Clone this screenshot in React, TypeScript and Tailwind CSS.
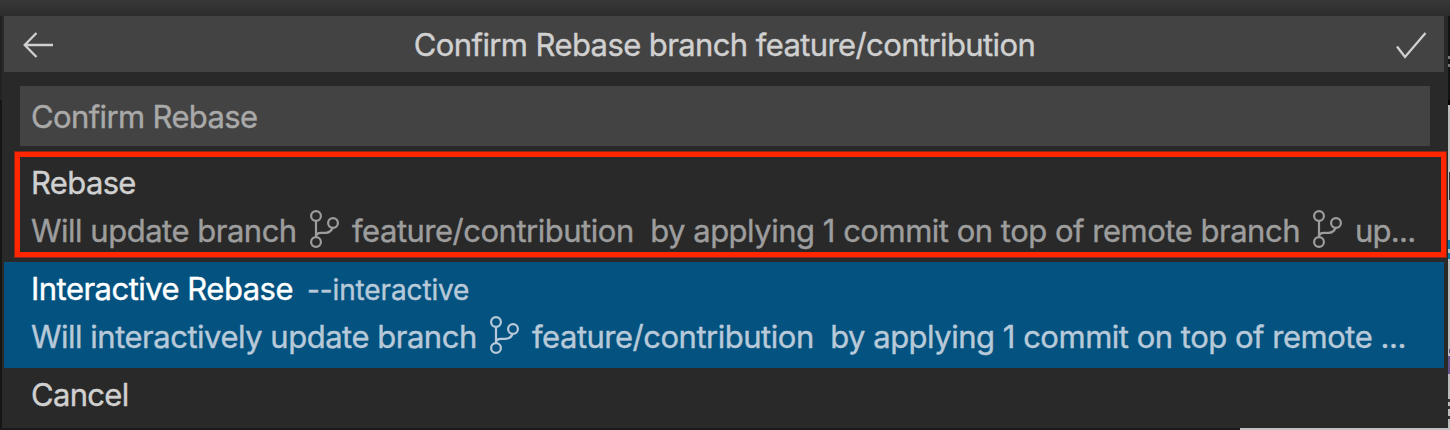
import React from "react";

function BranchIcon({ className = "" }: { className?: string }) {
  return (
    <svg viewBox="0 0 30 38" fill="none" stroke="currentColor" strokeWidth="2.2" className={"-mt-1 h-[38px] w-[30px] shrink-0 " + className}>
      <circle cx="6" cy="6" r="4.9" />
      <circle cx="6" cy="32" r="4.9" />
      <circle cx="23" cy="13" r="4.9" />
      <path d="M6 11v16c0-2.4 1.8-4.2 5-4.2h4.5c3.4 0 5.8-1.8 7-4.8" />
    </svg>
  );
}

function EditorEdge() {
  return (
    <div className="flex w-0.5 shrink-0 flex-col bg-[#bdbdbd]">
      <div className="h-10 shrink-0 bg-[#131313]" />
      <div className="h-[3px] shrink-0 bg-[#777]" />
      <div className="h-[5px] shrink-0 bg-[#131313]" />
      <div className="h-[3px] shrink-0 bg-[#777]" />
      <div className="h-[33px] shrink-0 bg-[#131313]" />
      <div className="h-[5px] shrink-0 bg-black" />
      <div className="mt-[67px] ml-px h-7 w-px shrink-0 bg-[#333]" />
      <div className="mt-10 h-[9px] shrink-0 bg-[#0879a5]" />
      <div className="mt-1 h-1.5 shrink-0 bg-[#0879a5]" />
      <div className="mt-[90px] ml-px h-1 w-px shrink-0 bg-[#6a5590]" />
      <div className="mt-[3px] h-[18px] shrink-0 bg-[#6a5590]" />
      <div className="mt-[25px] h-[3px] shrink-0 bg-[#333]" />
      <div className="mt-1 h-[3px] shrink-0 bg-[#333]" />
      <div className="mt-[7px] h-[3px] shrink-0 bg-[#333]" />
    </div>
  );
}

export default function App() {
  return (
    <div className="relative flex h-[430px] w-[1450px] flex-col overflow-hidden bg-[#1b1b1b] font-['Inter',sans-serif] text-[31px] leading-[48px] tracking-[-0.52px] whitespace-pre text-[#d0d0d0] [-webkit-text-stroke:0.4px_currentColor]">
      <div className="h-4 shrink-0 bg-gradient-to-b from-[#383838] to-[#2c2c2c]" />
      <div className="flex h-[412px] shrink-0">
        <div className="flex w-0.5 shrink-0 flex-col">
          <div className="h-[84px] bg-[#222]" />
          <div className="flex-1 bg-[#151515]" />
        </div>
        <div className="flex w-[1446px] shrink-0 flex-col bg-[#292929] pr-1 pl-0.5">
          <header className="flex h-14 shrink-0 items-center justify-between bg-[#434343] pt-0.5 pr-[17px] pl-[19px]">
            <svg viewBox="0 0 30 26" className="h-[26px] w-[30px]" fill="none" stroke="currentColor" strokeWidth="2.3">
              <path d="M13.5 1L1.7 13l11.8 12M1.5 13H30" />
            </svg>
            <h1 className="tracking-[-0.6px]">Confirm Rebase branch feature/contribution</h1>
            <svg viewBox="0 0 31 27" className="h-[27px] w-[31px]" fill="none" stroke="currentColor" strokeWidth="2.3">
              <path d="M1 14.5L9 25L29.5 1" />
            </svg>
          </header>
          <div className="mt-3.5 ml-4 flex h-[60px] w-[1410px] shrink-0 items-center bg-[#434343] px-[11px] pt-0.5 tracking-[-0.63px] text-[#a9a9a9]">Confirm Rebase</div>
          <div className="mt-[13px] h-[103px] shrink-0 pl-[27px]">
            <div className="h-12 tracking-[-0.65px]">Rebase</div>
            <div className="flex h-12 items-center tracking-[-0.49px] text-[#9d9d9d]">
              <span className="w-[279px] shrink-0">Will update branch</span>
              <BranchIcon className="mr-3" />
              <span className="w-[961px] shrink-0">feature/contribution  by applying 1 commit on top of remote branch</span>
              <BranchIcon className="mr-3" />
              <span className="tracking-[-0.75px]">up...</span>
            </div>
          </div>
          <div className="h-[106px] shrink-0 bg-[#04527f] pt-[3px] pl-[27px]">
            <div className="flex h-12 text-white">
              <span className="w-[276px] shrink-0">Interactive Rebase</span>
              <span className="pt-px text-[28px] tracking-[-0.13px] text-[#b8c9d9]">--interactive</span>
            </div>
            <div className="flex h-12 items-center tracking-[-0.49px] text-[#b8c9d9]">
              <span className="w-[459px] shrink-0">Will interactively update branch</span>
              <BranchIcon className="mr-3" />
              <span>feature/contribution  by applying 1 commit on top of remote ...</span>
            </div>
          </div>
          <div className="flex h-[54px] items-center pl-[27px] tracking-[-0.7px]">Cancel</div>
        </div>
        <EditorEdge />
      </div>
      <div className="flex h-0.5 shrink-0">
        <div className="w-[1240px] bg-[#191919]" />
        <div className="flex-1 bg-[#c0c0c0]" />
      </div>
      <div className="absolute top-[152px] left-[15px] h-[105px] w-[1431px] border-[5px] border-[#ff2600] ring-1 ring-[#8a2716]" />
    </div>
  );
}
